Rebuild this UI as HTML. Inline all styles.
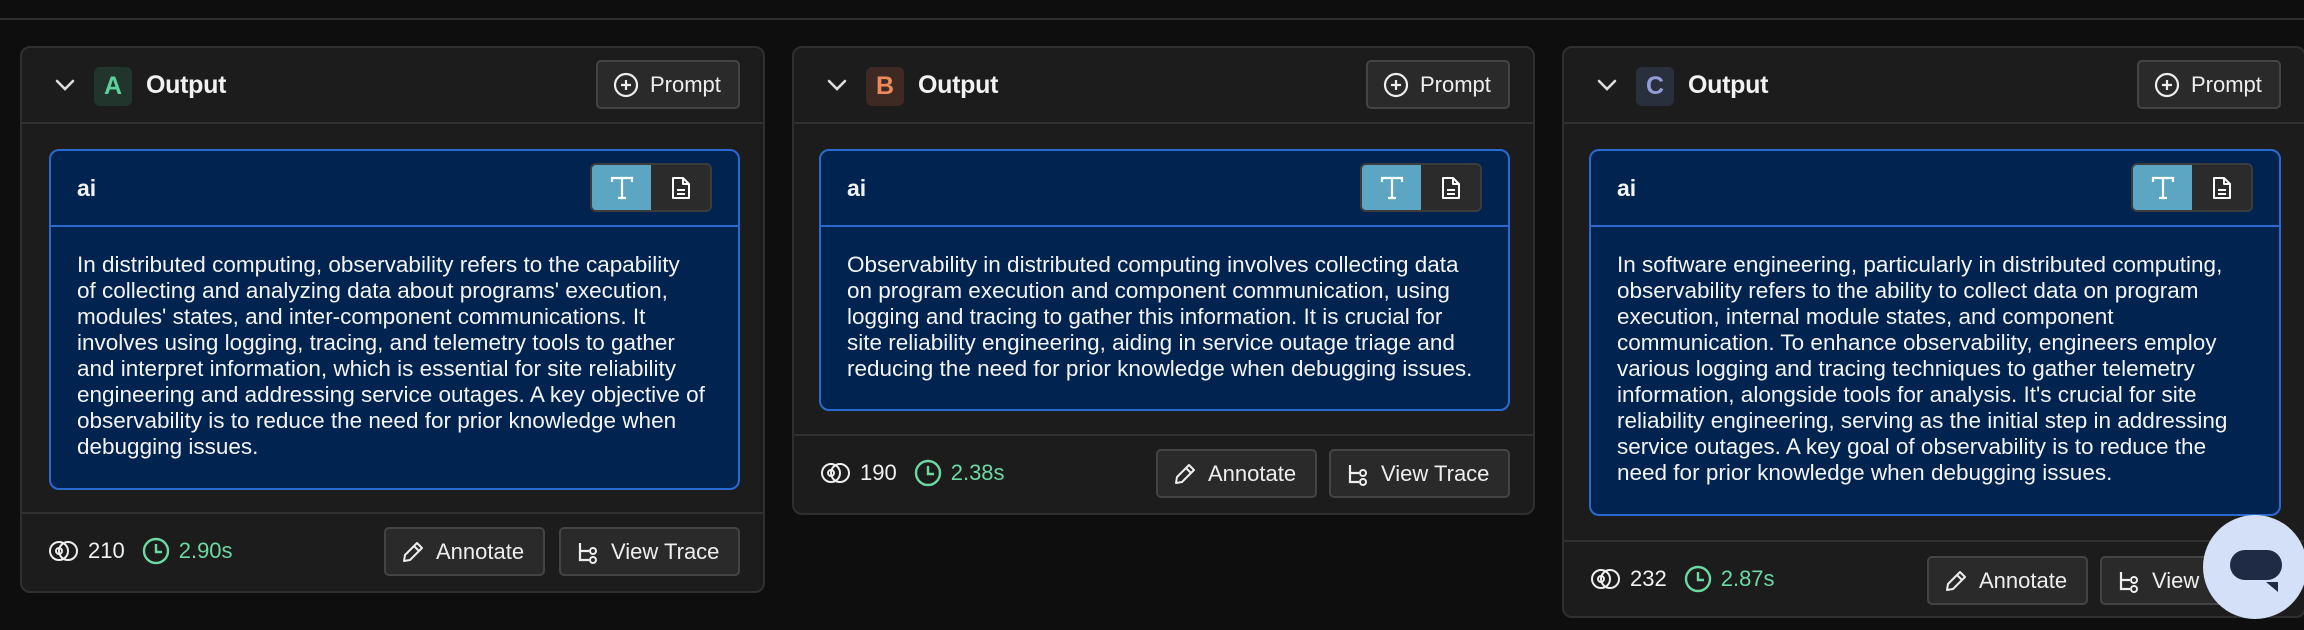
<!DOCTYPE html>
<html><head><meta charset="utf-8"><style>
*{box-sizing:border-box;margin:0;padding:0}
body{width:2304px;height:630px;background:#0e0e0e;font-family:"Liberation Sans",sans-serif;color:#f2f2f2;position:relative;overflow:hidden}
.topline{position:absolute;left:0;right:0;top:18px;height:2px;background:#2e2e2e}
.panel{position:absolute;top:46px;background:#1c1c1c;border:2px solid #2f2f2f;border-radius:10px}
.hdr{position:absolute;left:0;right:0;top:0;height:76px;border-bottom:2px solid #303030}
.chev{position:absolute;left:32px;top:30px}
.badge{position:absolute;left:72px;top:19px;width:38px;height:39px;border-radius:6px;font-weight:bold;font-size:25px;text-align:center;line-height:39px}
.title{position:absolute;left:124px;top:23px;font-size:25px;font-weight:bold;letter-spacing:-0.3px}
.btn{position:absolute;height:49px;border:2px solid #444;border-radius:5px;background:#2a2a2a;font-size:22px;color:#eee;display:flex;align-items:center;gap:10px;padding-left:14px}
.inner{position:absolute;background:#002350;border:2px solid #2a6ad0;border-radius:10px}
.ih{height:76px;border-bottom:2px solid #2a6ad0;position:relative}
.ai{position:absolute;left:26px;top:24px;font-weight:bold;font-size:23px}
.tog{position:absolute;right:26px;top:12px;width:122px;height:49px;border:2px solid #3c3c3c;border-radius:6px;overflow:hidden;display:flex}
.tog div{flex:1;display:flex;align-items:center;justify-content:center}
.txt{padding:25px 20px 0 26px;font-size:22.5px;line-height:26px;color:#f4f4f4;white-space:nowrap}
.ftr{position:absolute;left:0;right:0;bottom:0;border-top:2px solid #303030}
.stat{position:absolute;left:26px;display:flex;align-items:center;font-size:22px}
</style></head><body>
<div class="topline"></div>

<!-- Panel A -->
<div class="panel" style="left:20px;width:745px;height:547px">
 <div class="hdr">
  <svg class="chev" width="22" height="14" viewBox="0 0 22 14"><path d="M3 3l8 8 8-8" stroke="#ddd" stroke-width="2.6" fill="none" stroke-linecap="round"/></svg>
  <div class="badge" style="background:#21352d;color:#5fcf9c">A</div>
  <div class="title">Output</div>
  <div class="btn" style="left:574px;top:12px;width:144px"><svg width="28" height="28" viewBox="0 0 28 28"><circle cx="14" cy="14" r="11" stroke="#eee" stroke-width="2.2" fill="none"/><path d="M14 9v10M9 14h10" stroke="#eee" stroke-width="2.2"/></svg>Prompt</div>
 </div>
 <div class="inner" style="left:27px;top:101px;width:691px;height:341px">
  <div class="ih"><div class="ai">ai</div><div class="tog"><div style="background:#5ca6c3"><svg width="26" height="26" viewBox="0 0 26 26"><path d="M3 7V3h20v4M13 3v20M9 23h8" stroke="#fff" stroke-width="2.2" fill="none"/></svg></div><div style="background:#2b2b2b"><svg width="22" height="26" viewBox="0 0 22 26"><path d="M3 3h10l6 6v14H3z M13 3v6h6 M7 15h8M7 19h8" stroke="#fff" stroke-width="2" fill="none" stroke-linejoin="round"/></svg></div></div></div>
  <div class="txt">In distributed computing, observability refers to the capability<br>of collecting and analyzing data about programs' execution,<br>modules' states, and inter-component communications. It<br>involves using logging, tracing, and telemetry tools to gather<br>and interpret information, which is essential for site reliability<br>engineering and addressing service outages. A key objective of<br>observability is to reduce the need for prior knowledge when<br>debugging issues.</div>
 </div>
 <div class="ftr" style="height:79px">
  <div class="stat" style="top:22px"><svg width="32" height="22" viewBox="0 0 32 22"><circle cx="11" cy="11" r="9" stroke="#eee" stroke-width="2" fill="none"/><circle cx="20" cy="11" r="9" stroke="#eee" stroke-width="2" fill="none"/><circle cx="11" cy="11" r="3" stroke="#eee" stroke-width="2" fill="none"/></svg><span style="margin-left:8px">210</span><svg style="margin-left:16px" width="30" height="30" viewBox="0 0 30 30"><circle cx="15" cy="15" r="12" stroke="#6cd9a3" stroke-width="2.4" fill="none"/><path d="M15 8v8h6" stroke="#6cd9a3" stroke-width="2.4" fill="none"/></svg><span style="margin-left:8px;color:#6cd9a3">2.90s</span></div>
  <div class="btn" style="left:362px;top:13px;width:161px"><svg width="26" height="26" viewBox="0 0 26 26"><path d="M4 22l1-6L17 4l5 5-12 12z M14 7l5 5" stroke="#eee" stroke-width="2" fill="none" stroke-linejoin="round"/></svg>Annotate</div>
  <div class="btn" style="left:537px;top:13px;width:181px"><svg width="26" height="26" viewBox="0 0 26 26"><path d="M5 4v17h9M5 12h9" stroke="#eee" stroke-width="2.2" fill="none"/><circle cx="18" cy="12" r="3" stroke="#eee" stroke-width="2" fill="none"/><circle cx="18" cy="21" r="3" stroke="#eee" stroke-width="2" fill="none"/></svg>View Trace</div>
 </div>
</div>

<!-- Panel B -->
<div class="panel" style="left:792px;width:743px;height:469px">
 <div class="hdr">
  <svg class="chev" width="22" height="14" viewBox="0 0 22 14"><path d="M3 3l8 8 8-8" stroke="#ddd" stroke-width="2.6" fill="none" stroke-linecap="round"/></svg>
  <div class="badge" style="background:#3d2a22;color:#f0895a">B</div>
  <div class="title">Output</div>
  <div class="btn" style="left:572px;top:12px;width:144px"><svg width="28" height="28" viewBox="0 0 28 28"><circle cx="14" cy="14" r="11" stroke="#eee" stroke-width="2.2" fill="none"/><path d="M14 9v10M9 14h10" stroke="#eee" stroke-width="2.2"/></svg>Prompt</div>
 </div>
 <div class="inner" style="left:25px;top:101px;width:691px;height:262px">
  <div class="ih"><div class="ai">ai</div><div class="tog"><div style="background:#5ca6c3"><svg width="26" height="26" viewBox="0 0 26 26"><path d="M3 7V3h20v4M13 3v20M9 23h8" stroke="#fff" stroke-width="2.2" fill="none"/></svg></div><div style="background:#2b2b2b"><svg width="22" height="26" viewBox="0 0 22 26"><path d="M3 3h10l6 6v14H3z M13 3v6h6 M7 15h8M7 19h8" stroke="#fff" stroke-width="2" fill="none" stroke-linejoin="round"/></svg></div></div></div>
  <div class="txt">Observability in distributed computing involves collecting data<br>on program execution and component communication, using<br>logging and tracing to gather this information. It is crucial for<br>site reliability engineering, aiding in service outage triage and<br>reducing the need for prior knowledge when debugging issues.</div>
 </div>
 <div class="ftr" style="height:79px">
  <div class="stat" style="top:22px"><svg width="32" height="22" viewBox="0 0 32 22"><circle cx="11" cy="11" r="9" stroke="#eee" stroke-width="2" fill="none"/><circle cx="20" cy="11" r="9" stroke="#eee" stroke-width="2" fill="none"/><circle cx="11" cy="11" r="3" stroke="#eee" stroke-width="2" fill="none"/></svg><span style="margin-left:8px">190</span><svg style="margin-left:16px" width="30" height="30" viewBox="0 0 30 30"><circle cx="15" cy="15" r="12" stroke="#6cd9a3" stroke-width="2.4" fill="none"/><path d="M15 8v8h6" stroke="#6cd9a3" stroke-width="2.4" fill="none"/></svg><span style="margin-left:8px;color:#6cd9a3">2.38s</span></div>
  <div class="btn" style="left:362px;top:13px;width:161px"><svg width="26" height="26" viewBox="0 0 26 26"><path d="M4 22l1-6L17 4l5 5-12 12z M14 7l5 5" stroke="#eee" stroke-width="2" fill="none" stroke-linejoin="round"/></svg>Annotate</div>
  <div class="btn" style="left:535px;top:13px;width:181px"><svg width="26" height="26" viewBox="0 0 26 26"><path d="M5 4v17h9M5 12h9" stroke="#eee" stroke-width="2.2" fill="none"/><circle cx="18" cy="12" r="3" stroke="#eee" stroke-width="2" fill="none"/><circle cx="18" cy="21" r="3" stroke="#eee" stroke-width="2" fill="none"/></svg>View Trace</div>
 </div>
</div>

<!-- Panel C -->
<div class="panel" style="left:1562px;width:744px;height:572px">
 <div class="hdr">
  <svg class="chev" width="22" height="14" viewBox="0 0 22 14"><path d="M3 3l8 8 8-8" stroke="#ddd" stroke-width="2.6" fill="none" stroke-linecap="round"/></svg>
  <div class="badge" style="background:#2a2f3d;color:#8f9ed8">C</div>
  <div class="title">Output</div>
  <div class="btn" style="left:573px;top:12px;width:144px"><svg width="28" height="28" viewBox="0 0 28 28"><circle cx="14" cy="14" r="11" stroke="#eee" stroke-width="2.2" fill="none"/><path d="M14 9v10M9 14h10" stroke="#eee" stroke-width="2.2"/></svg>Prompt</div>
 </div>
 <div class="inner" style="left:25px;top:101px;width:692px;height:367px">
  <div class="ih"><div class="ai">ai</div><div class="tog"><div style="background:#5ca6c3"><svg width="26" height="26" viewBox="0 0 26 26"><path d="M3 7V3h20v4M13 3v20M9 23h8" stroke="#fff" stroke-width="2.2" fill="none"/></svg></div><div style="background:#2b2b2b"><svg width="22" height="26" viewBox="0 0 22 26"><path d="M3 3h10l6 6v14H3z M13 3v6h6 M7 15h8M7 19h8" stroke="#fff" stroke-width="2" fill="none" stroke-linejoin="round"/></svg></div></div></div>
  <div class="txt">In software engineering, particularly in distributed computing,<br>observability refers to the ability to collect data on program<br>execution, internal module states, and component<br>communication. To enhance observability, engineers employ<br>various logging and tracing techniques to gather telemetry<br>information, alongside tools for analysis. It's crucial for site<br>reliability engineering, serving as the initial step in addressing<br>service outages. A key goal of observability is to reduce the<br>need for prior knowledge when debugging issues.</div>
 </div>
 <div class="ftr" style="height:76px">
  <div class="stat" style="top:22px"><svg width="32" height="22" viewBox="0 0 32 22"><circle cx="11" cy="11" r="9" stroke="#eee" stroke-width="2" fill="none"/><circle cx="20" cy="11" r="9" stroke="#eee" stroke-width="2" fill="none"/><circle cx="11" cy="11" r="3" stroke="#eee" stroke-width="2" fill="none"/></svg><span style="margin-left:8px">232</span><svg style="margin-left:16px" width="30" height="30" viewBox="0 0 30 30"><circle cx="15" cy="15" r="12" stroke="#6cd9a3" stroke-width="2.4" fill="none"/><path d="M15 8v8h6" stroke="#6cd9a3" stroke-width="2.4" fill="none"/></svg><span style="margin-left:8px;color:#6cd9a3">2.87s</span></div>
  <div class="btn" style="left:363px;top:14px;width:161px"><svg width="26" height="26" viewBox="0 0 26 26"><path d="M4 22l1-6L17 4l5 5-12 12z M14 7l5 5" stroke="#eee" stroke-width="2" fill="none" stroke-linejoin="round"/></svg>Annotate</div>
  <div class="btn" style="left:536px;top:14px;width:181px"><svg width="26" height="26" viewBox="0 0 26 26"><path d="M5 4v17h9M5 12h9" stroke="#eee" stroke-width="2.2" fill="none"/><circle cx="18" cy="12" r="3" stroke="#eee" stroke-width="2" fill="none"/><circle cx="18" cy="21" r="3" stroke="#eee" stroke-width="2" fill="none"/></svg>View Trace</div>
 </div>
</div>

<!-- chat bubble -->
<div style="position:absolute;left:2203px;top:515px;width:104px;height:104px;border-radius:50%;background:#d3e0f7"></div>
<svg style="position:absolute;left:2226px;top:548px" width="60" height="46" viewBox="0 0 60 46"><rect x="4" y="2" width="52" height="30" rx="15" fill="#1f2b44"/><path d="M40 34h12v10z" fill="#1f2b44"/></svg>
</body></html>
